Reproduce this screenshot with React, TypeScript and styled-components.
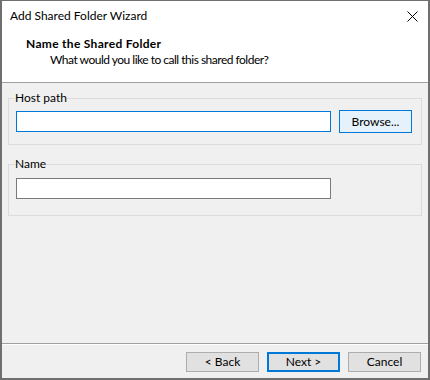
import styled, { createGlobalStyle } from "styled-components"

const Global = createGlobalStyle`
  html, body {
    margin: 0;
    padding: 0;
    background: #6f6f6f;
  }
  body {
    font-family: Lato, "Noto Sans", "Liberation Sans", sans-serif;
    font-size: 12px;
    line-height: 16px;
    color: #000;
  }
`

const CloseIcon = () => (
  <svg width="11" height="11" viewBox="0 0 11 11">
    <path d="M0.5 0.5 L10.5 10.5 M10.5 0.5 L0.5 10.5" stroke="#000" strokeWidth="1" />
  </svg>
)

const App = () => {
  return (
    <>
      <Global />
      <S.Window>
        <S.TitleBar>
          <S.Title>Add Shared Folder Wizard</S.Title>
          <S.Close>
            <CloseIcon />
          </S.Close>
        </S.TitleBar>
        <S.Header>
          <S.Heading>Name the Shared Folder</S.Heading>
          <S.Subheading>What would you like to call this shared folder?</S.Subheading>
        </S.Header>
        <S.Body>
          <S.Group $top={4} $bottom={11}>
            <S.Legend>Host path</S.Legend>
            <S.Row>
              <S.Input $focused />
              <S.Button $hot>Browse...</S.Button>
            </S.Row>
          </S.Group>
          <S.Group $top={5} $bottom={15}>
            <S.Legend>Name</S.Legend>
            <S.Row>
              <S.Input />
            </S.Row>
          </S.Group>
        </S.Body>
        <S.Footer>
          <S.Button $short>&lt; Back</S.Button>
          <S.Button $short $default>Next &gt;</S.Button>
          <S.Button $short>Cancel</S.Button>
        </S.Footer>
      </S.Window>
    </>
  )
}

const S = {
  Window: styled.div`
    box-sizing: border-box;
    width: 430px;
    height: 380px;
    display: flex;
    flex-direction: column;
    border-style: solid;
    border-color: #6f6f6f;
    border-width: 1px 2px 2px 2px;
    background: #f0f0f0;
  `,
  TitleBar: styled.div`
    height: 30px;
    display: flex;
    align-items: center;
    justify-content: space-between;
    padding: 0 10px 0 8px;
    background: #fff;
  `,
  Title: styled.div`
    margin-top: -1px;
  `,
  Close: styled.div`
    display: flex;
    width: 11px;
    height: 11px;
    margin-top: 1px;
  `,
  Header: styled.div`
    box-sizing: content-box;
    height: 46px;
    padding: 5px 0 0 24px;
    background: #fff;
    border-bottom: 1px solid #a0a0a0;
  `,
  Heading: styled.div`
    font-weight: bold;
    letter-spacing: 0.3px;
  `,
  Subheading: styled.div`
    padding-left: 24px;
    letter-spacing: -0.5px;
  `,
  Body: styled.div`
    flex: 1;
    display: flex;
    flex-direction: column;
    gap: 11px;
    padding: 7px 6px 0 6px;
  `,
  Group: styled.fieldset<{ $top: number; $bottom: number }>`
    margin: 0;
    border: 1px solid #dcdcdc;
    padding: ${(p) => p.$top}px 7px ${(p) => p.$bottom}px 7px;
  `,
  Legend: styled.legend`
    padding: 0;
    margin-left: -1px;
  `,
  Row: styled.div`
    display: flex;
    align-items: center;
    gap: 8px;
    height: 23px;
  `,
  Input: styled.div<{ $focused?: boolean }>`
    box-sizing: border-box;
    width: 315px;
    height: 21px;
    background: #fff;
    border: 1px solid ${(p) => (p.$focused ? "#0078d7" : "#7a7a7a")};
  `,
  Button: styled.button<{ $hot?: boolean; $default?: boolean; $short?: boolean }>`
    box-sizing: border-box;
    width: 73px;
    height: ${(p) => (p.$short ? 20 : 23)}px;
    padding: 0;
    font: inherit;
    color: #000;
    background: ${(p) => (p.$hot ? "#e5f1fb" : "#e1e1e1")};
    border: ${(p) => (p.$default ? 2 : 1)}px solid
      ${(p) => (p.$hot || p.$default ? "#0078d7" : "#adadad")};
    border-radius: 0;
  `,
  Footer: styled.div`
    display: flex;
    justify-content: flex-end;
    gap: 8px;
    height: 35px;
    box-sizing: border-box;
    padding: 8px 7px 0 0;
    border-top: 1px solid #a0a0a0;
    box-shadow: inset 0 1px 0 #fff;
  `,
}

export default App
